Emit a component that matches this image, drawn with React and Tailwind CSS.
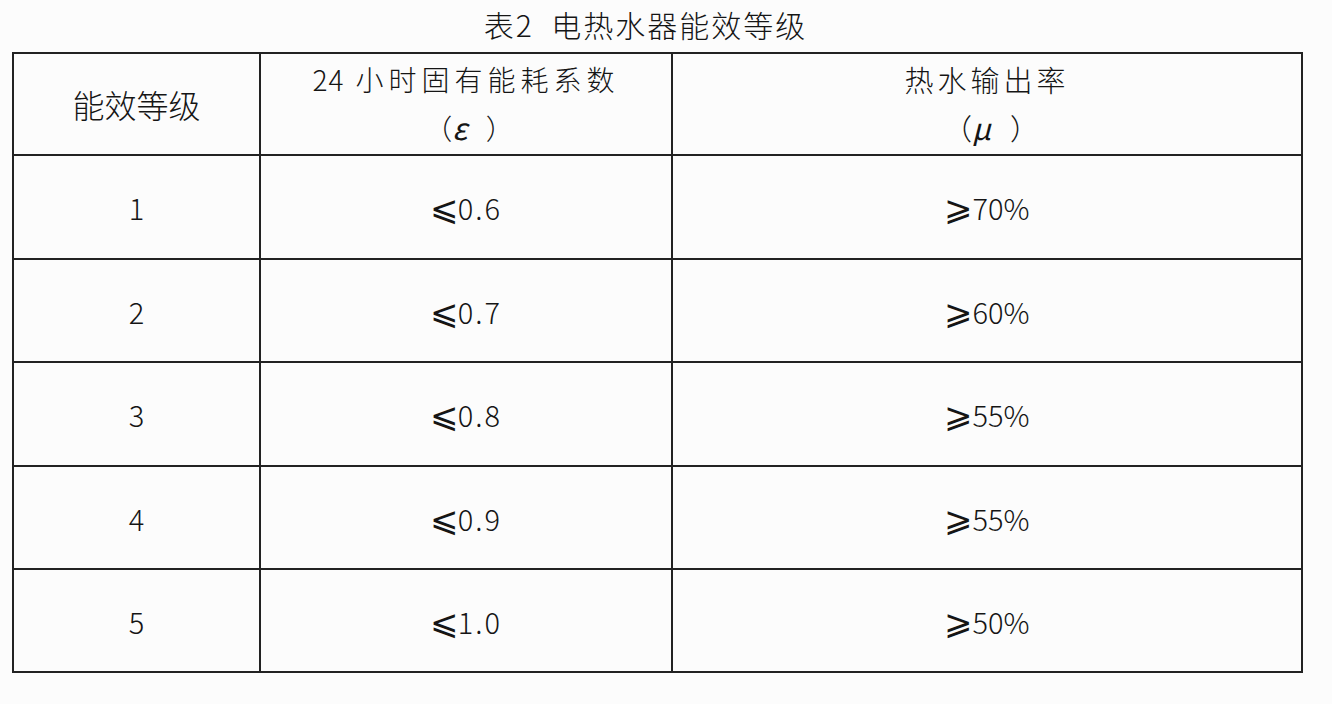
import React from "react";

const rows = [
  { level: "1", eps: "0.6", mu: "70%", h: "h-[104px]" },
  { level: "2", eps: "0.7", mu: "60%", h: "h-[103px]" },
  { level: "3", eps: "0.8", mu: "55%", h: "h-[104px]" },
  { level: "4", eps: "0.9", mu: "55%", h: "h-[103px]" },
  { level: "5", eps: "1.0", mu: "50%", h: "h-[103px]" },
];

const font = {
  fontFamily: '"Noto Sans CJK SC", "DejaVu Sans", sans-serif',
};

export default function App() {
  return (
    <div
      className="w-[1332px] h-[704px] bg-[#fcfcfc] text-[#151515] font-light"
      style={font}
    >
      <div className="w-[1289px] ml-[12px] pt-[4px] pr-[22px] text-center text-[30px] leading-[40px] tracking-[2px]">
        表2&nbsp; 电热水器能效等级
      </div>
      <table className="ml-[12px] mt-[8px] w-[1289px] table-fixed border-collapse border-2 border-[#222]">
        <colgroup>
          <col className="w-[247px]" />
          <col className="w-[412px]" />
          <col className="w-[630px]" />
        </colgroup>
        <thead>
          <tr className="h-[102px]">
            <th className="border-2 border-[#222] font-light text-[32px] leading-[40px] p-0">
              能效等级
            </th>
            <th className="border-2 border-[#222] font-light text-[28px] leading-[48px] p-0">
              <div className="-mt-[2px]">
                <span className="tracking-[1px]">24</span>
                <span className="tracking-[5px]"> 小时固有能耗系数</span>
              </div>
              <div className="pl-[6px]">
                （<i className="font-normal text-[30px]">ε</i>&nbsp;&nbsp;&nbsp;）
              </div>
            </th>
            <th className="border-2 border-[#222] font-light text-[29px] leading-[48px] p-0">
              <div className="tracking-[4px] -mt-[2px]">热水输出率</div>
              <div className="pl-[8px]">
                （<i className="font-normal text-[30px]">μ</i>&nbsp;&nbsp;&nbsp;）
              </div>
            </th>
          </tr>
        </thead>
        <tbody>
          {rows.map((r) => (
            <tr key={r.level} className={r.h}>
              <td className="border-2 border-[#222] text-center text-[29px] leading-[40px] p-0">
                {r.level}
              </td>
              <td className="border-2 border-[#222] text-center text-[29px] leading-[40px] p-0">
                <span className="text-[34px] leading-none">⩽</span>
                <span className="tracking-[2px]">{r.eps}</span>
              </td>
              <td className="border-2 border-[#222] text-center text-[29px] leading-[40px] p-0">
                <span className="text-[34px] leading-none">⩾</span>
                {r.mu}
              </td>
            </tr>
          ))}
        </tbody>
      </table>
    </div>
  );
}
